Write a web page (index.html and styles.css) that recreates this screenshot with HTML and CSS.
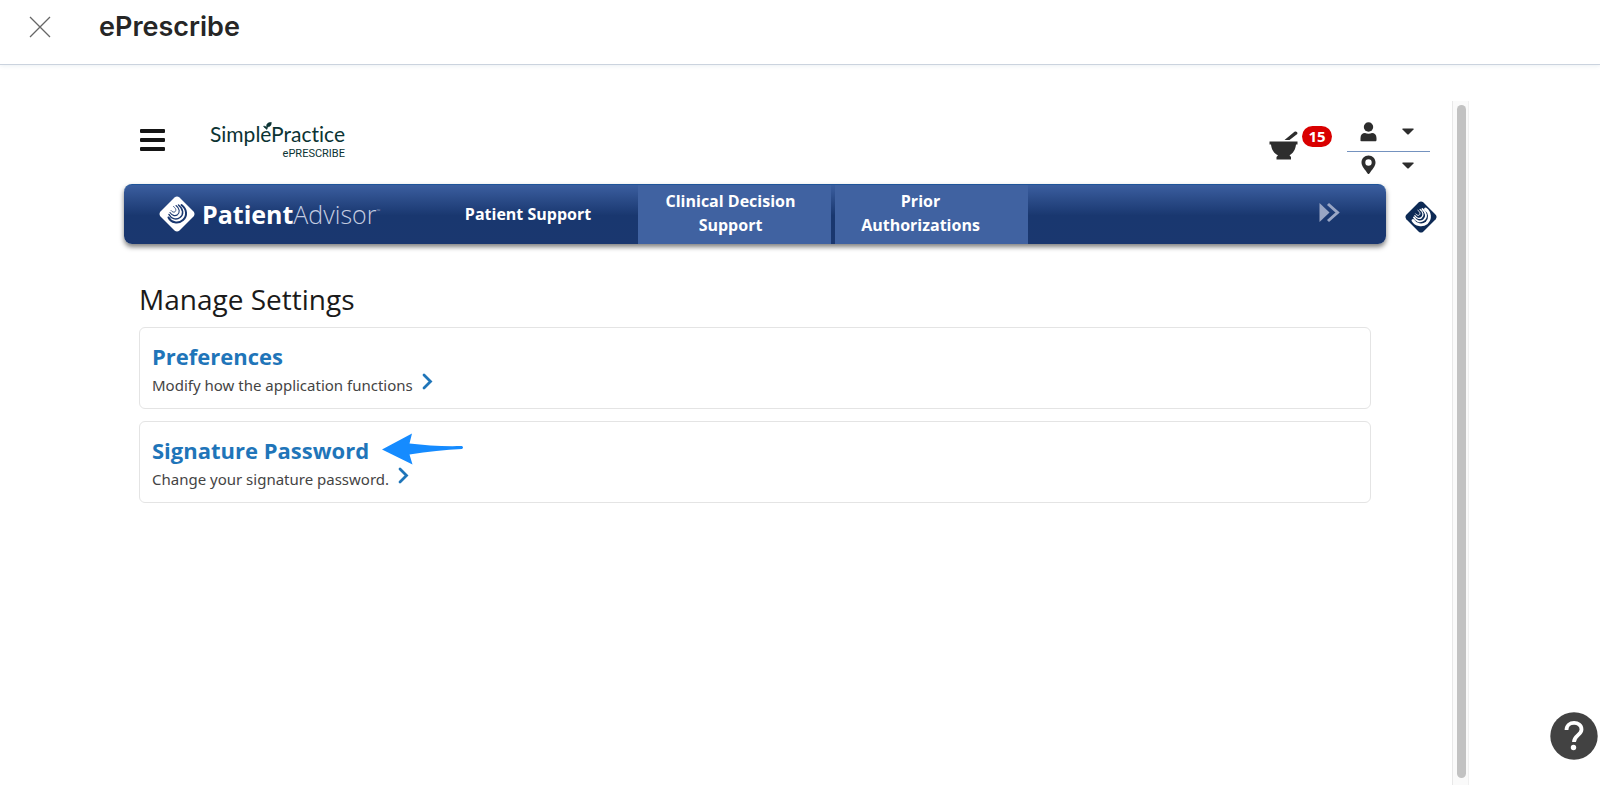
FILE: index.html
```html
<!DOCTYPE html>
<html lang="en">
<head>
    <meta charset="UTF-8">
    <meta name="viewport" content="width=device-width, initial-scale=1.0">
    <title>ePrescribe</title>
    <link rel="stylesheet" href="styles.css">
</head>
<body>
    <header class="topbar">
        <button class="close" aria-label="Close">
            <svg width="22" height="22" viewBox="0 0 22 22"><path d="M1 1L21 21M21 1L1 21" fill="none" stroke="#666" stroke-width="1.3"/></svg>
        </button>
        <h1>ePrescribe</h1>
    </header>

    <div class="frame">
        <div class="content">
            <div class="app-header">
                <button class="menu" aria-label="Menu">
                    <span></span><span></span><span></span>
                </button>
                <a class="logo" href="#">
                    <span class="logo-name">SimplePractice</span>
                    <span class="logo-sub">ePRESCRIBE</span>
                    <svg class="leaf" width="9" height="8" viewBox="0 0 9 8"><path d="M3.500 4C3.500 1.500 5.500 0.300 8.300 0.200C8.600 3 7 5 4.500 4.900C4.500 6 4.200 7 3.800 7.500C3 6.500 1.500 6 0.500 4.200C1.800 4 3 4.500 3.700 5.500Z" fill="#0b3333" stroke="#0b3333" stroke-width="0.500"/></svg>
                </a>
                <div class="header-tools">
                    <button class="pharmacy" aria-label="Pharmacy tasks">
                        <svg width="29" height="29" viewBox="0 0 29 29" fill="#2d2d2d"><path d="M0.500 10.500H28.500V13.500H27C26.500 18.500 24 22.500 20.500 24.200L22 26V28.500H7.500V26L9 24.200C5 22.500 2.500 18.500 2 13.500H0.500ZM15.500 9L25.500 0.700C27.500 0 28.800 1.200 28.300 3L20.500 9Z"/></svg>
                        <span class="badge">15</span>
                    </button>
                    <div class="account">
                        <button class="account-row" aria-label="User">
                            <svg width="17" height="20" viewBox="0 0 17 20" fill="#2d2d2d"><circle cx="8.500" cy="5" r="4.700"/><path d="M0.500 19V16C0.500 12.800 2.500 11 5 11C7 12 10 12 12 11C14.500 11 16.500 12.800 16.500 16V18C16.500 18.800 16 19.300 15.200 19.300H1.500Z"/></svg>
                            <svg width="12" height="7" viewBox="0 0 12 7" fill="#2d2d2d"><path d="M0.500 0.500H11.500V1.500L6.500 6.500H5.500L0.500 1.500Z"/></svg>
                        </button>
                        <button class="account-row" aria-label="Location">
                            <svg width="17" height="20" viewBox="0 0 17 20" fill="#2d2d2d"><path fill-rule="evenodd" d="M8.500 0.500C4.500 0.500 1.500 3.500 1.500 7.500C1.500 11.500 5 14.500 8 19H9C12 14.500 15.500 11.500 15.500 7.500C15.500 3.500 12.500 0.500 8.500 0.500ZM8.500 4.300A3.200 3.200 0 1 1 8.500 10.700A3.200 3.200 0 1 1 8.500 4.300Z"/></svg>
                            <svg width="12" height="7" viewBox="0 0 12 7" fill="#2d2d2d"><path d="M0.500 0.500H11.500V1.500L6.500 6.500H5.500L0.500 1.500Z"/></svg>
                        </button>
                    </div>
                </div>
            </div>

            <div class="advisor-row">
                <nav class="advisor">
                    <a class="brand" href="#">
                        <svg width="36" height="36" viewBox="0 0 36 36">
                            <path d="M15.500 1.500Q18 -0.500 20.500 1.500L34.500 15.500Q36.500 18 34.500 20.500L20.500 34.500Q18 36.500 15.500 34.500L1.500 20.500Q-0.500 18 1.500 15.500Z" fill="#fff"/>
                            <g fill="none" stroke="#19376f" stroke-linecap="round">
                                <path d="M22.500 9C28 13 28.500 20 24 24C19 28.500 12 26.500 9.500 21.500" stroke-width="2"/>
                                <path d="M19.500 9C24.500 13 25 18.500 21 21.500C17 24.500 12 22.500 10 18.500" stroke-width="1.500"/>
                                <path d="M17 9.500C21 12.500 21 16.500 18.500 18.700C16 20.500 13 19.500 11 16.500" stroke-width="1.100"/>
                                <path d="M14.500 10.500C17 12 17.500 14.500 16 15.800C15 16.700 13 16 12 14.500" stroke-width="0.800"/>
                            </g>
                        </svg>
                        <span class="brand-text"><b>Patient</b><span>Advisor</span><small>™</small></span>
                    </a>
                    <a class="tab support" href="#">Patient Support</a>
                    <a class="tab active" href="#">Clinical Decision Support</a>
                    <a class="tab active prior" href="#">Prior Authorizations</a>
                    <button class="more" aria-label="More">
                        <svg width="21" height="21" viewBox="0 0 21 21"><path d="M0.500 1V20L10.500 10.500Z" fill="#99a6c4"/><path d="M9 2L18.500 10.500L9 19" fill="none" stroke="#99a6c4" stroke-width="3"/></svg>
                    </button>
                </nav>
                <a class="advisor-icon" href="#" aria-label="PatientAdvisor">
                    <svg width="32" height="32" viewBox="0 0 36 36">
                        <path d="M15.500 1.500Q18 -0.500 20.500 1.500L34.500 15.500Q36.500 18 34.500 20.500L20.500 34.500Q18 36.500 15.500 34.500L1.500 20.500Q-0.500 18 1.500 15.500Z" fill="#0d2a55"/>
                        <g fill="none" stroke="#fff" stroke-linecap="round">
                            <path d="M23 9C28.500 13 29 20 24.500 24.500C19.500 28.500 12 27 9 22" stroke-width="3.200"/>
                            <path d="M19.500 9C24.500 13 25 18.500 21 21.500C17 24.500 12 22.500 10 18.500" stroke-width="2"/>
                            <path d="M17 9.500C21 12.500 21 16.500 18.500 18.700C16 20.500 13 19.500 11 16.500" stroke-width="1.400"/>
                            <path d="M14.500 10.500C17 12 17.500 14.500 16 15.800C15 16.700 13 16 12 14.500" stroke-width="1"/>
                        </g>
                    </svg>
                </a>
            </div>

            <main class="settings">
                <h2>Manage Settings</h2>
                <a class="card" href="#">
                    <h3>Preferences</h3>
                    <p>Modify how the application functions
                        <svg class="chevron" width="11" height="17" viewBox="0 0 11 17"><path d="M2 2L8.500 8.500L2 15" fill="none" stroke="#1f75b9" stroke-width="2.800" stroke-linecap="round"/></svg>
                    </p>
                </a>
                <a class="card" href="#">
                    <h3>Signature Password
                        <svg class="arrow" width="84" height="34" viewBox="0 0 84 34"><path d="M1 16.500L31 0.500L28.500 10.500C45 12.500 62 13.500 81 13Q83 14.500 81 16C64 17 47 18.500 28.500 21.500L31.500 31.500Z" fill="#158bff"/></svg>
                    </h3>
                    <p>Change your signature password.
                        <svg class="chevron" width="11" height="17" viewBox="0 0 11 17"><path d="M2 2L8.500 8.500L2 15" fill="none" stroke="#1f75b9" stroke-width="2.800" stroke-linecap="round"/></svg>
                    </p>
                </a>
            </main>
        </div>
        <div class="scrollbar"><div class="thumb"></div></div>
    </div>

    <button class="help" aria-label="Help">
        <svg width="48" height="48" viewBox="0 0 48 48"><circle cx="24" cy="24" r="23.700" fill="#424242"/><path d="M16.500 18C16.500 8.500 31.500 8.500 31.500 17.500C31.500 23 24 23.500 24 30" fill="none" stroke="#fff" stroke-width="3.800"/><circle cx="23.500" cy="35.500" r="2.700" fill="#fff"/></svg>
    </button>
</body>
</html>
```
FILE: styles.css
```css
* {
    box-sizing: border-box;
}

body {
    margin: 0;
    min-height: 100vh;
    display: flex;
    flex-direction: column;
    font-family: "Open Sans", sans-serif;
    background: #fff;
    color: #1a1a1a;
}

button {
    padding: 0;
    border: none;
    background: none;
    font-family: inherit;
    cursor: pointer;
}

a {
    color: inherit;
    text-decoration: none;
}

svg {
    display: block;
}

h1, h2, h3, p {
    margin: 0;
}

/* Top bar */
.topbar {
    display: flex;
    align-items: center;
    gap: 48px;
    height: 65px;
    padding: 0 29px 11px;
    border-bottom: 1px solid #cbd3de;
    box-shadow: 0 1px 4px rgba(60, 110, 140, 0.1);
}

.topbar h1 {
    font: 600 27px/32px Inter, sans-serif;
    color: #262626;
}

/* Embedded application */
.frame {
    flex: 1;
    display: flex;
    margin: 36px 131px 0 124px;
}

.content {
    flex: 1;
}

.scrollbar {
    display: flex;
    width: 17px;
    padding: 4px 2px 7px 4px;
    background: #fafafa;
    border-left: 1px solid #e8e8e8;
    border-right: 1px solid #f0f0f0;
}

.thumb {
    flex: 1;
    border-radius: 5px;
    background: #c2c2c2;
}

.app-header {
    display: flex;
    align-items: flex-start;
    height: 83px;
    padding: 18px 22px 0 16px;
}

.menu {
    display: flex;
    flex-direction: column;
    gap: 5px;
    width: 25px;
    margin-top: 10px;
}

.menu span {
    height: 4px;
    border-radius: 1px;
    background: #151515;
}

.logo {
    position: relative;
    display: flex;
    flex-direction: column;
    align-items: flex-end;
    margin-left: 45px;
    color: #0b3333;
}

.logo-name {
    font: 21px/30px Lato, sans-serif;
    font-variant-ligatures: none;
}

.logo-sub {
    font: 11px/10px Roboto, sans-serif;
}

.leaf {
    position: absolute;
    top: 3px;
    left: 53px;
}

.header-tools {
    display: flex;
    gap: 15px;
    margin-left: auto;
}

.pharmacy {
    display: flex;
    align-items: flex-start;
    gap: 4px;
    padding-top: 7px;
}

.pharmacy svg {
    margin-top: 5px;
}

.badge {
    width: 30px;
    border-radius: 11px;
    background: #d90000;
    color: #fff;
    font-size: 15px;
    font-weight: 700;
    line-height: 21px;
    text-align: center;
}

.account {
    width: 83px;
}

.account-row {
    display: flex;
    align-items: center;
    justify-content: space-between;
    width: 100%;
    height: 33px;
    padding: 0 16px 7px 13px;
}

.account-row:first-child {
    border-bottom: 1px solid #7492bf;
}

/* PatientAdvisor bar */
.advisor-row {
    display: flex;
    align-items: center;
    gap: 19px;
    padding-right: 15px;
}

.advisor {
    flex: 1;
    display: flex;
    gap: 4px;
    height: 60px;
    border-top: 1px solid #1f5499;
    border-radius: 8px;
    background: linear-gradient(#3b5e9f, #19376f 52%, #1a376f);
    box-shadow: 0 3px 5px rgba(0, 0, 0, 0.5);
    color: #fff;
}

.brand {
    display: flex;
    align-items: center;
    gap: 7px;
    width: 290px;
    padding: 0 0 2px 35px;
}

.brand-text {
    display: flex;
    font-size: 25px;
    line-height: 36px;
}

.brand-text span {
    font-weight: 300;
    color: #c3cce0;
}

.brand-text small {
    font-size: 5px;
    line-height: 30px;
    color: #8b9bc0;
}

.tab {
    display: flex;
    align-items: center;
    justify-content: center;
    width: 193px;
    padding: 0 32px 4px 24px;
    font-size: 16px;
    font-weight: 700;
    line-height: 24px;
    text-align: center;
}

.tab.active {
    background: #4062a1;
}

.tab.prior {
    padding: 0 44px 4px 22px;
}

.tab.support {
    width: 216px;
    padding: 0 0 2px 4px;
}

.more {
    margin: 0 46px 4px auto;
}

.advisor-icon {
    margin-top: 5px;
}

/* Settings */
.settings {
    padding: 35px 81px 0 15px;
}

.settings h2 {
    margin-bottom: 8px;
    font-size: 28px;
    font-weight: 400;
    line-height: 40px;
}

.card {
    display: block;
    height: 82px;
    margin-bottom: 12px;
    padding: 15px 12px;
    border: 1px solid #e4e4e4;
    border-radius: 6px;
}

.card h3 {
    display: flex;
    align-items: center;
    gap: 12px;
    height: 26px;
    color: #1f75b9;
    font-size: 22px;
    line-height: 26px;
}

.card p {
    display: flex;
    gap: 9px;
    padding-top: 2px;
    color: #444;
    font: 15px/28px "Noto Sans", sans-serif;
}

.chevron {
    margin-top: 2px;
}

.help {
    position: fixed;
    right: 2px;
    bottom: 25px;
}
```
